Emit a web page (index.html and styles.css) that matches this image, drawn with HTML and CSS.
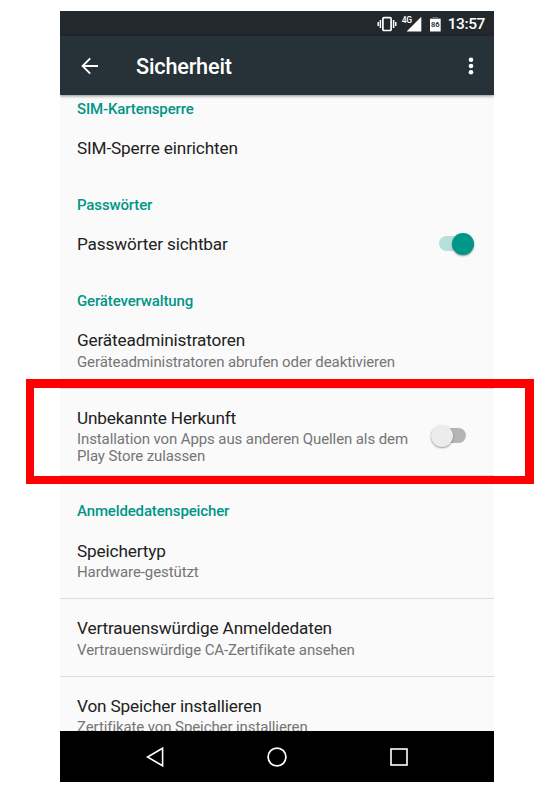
FILE: index.html
```html
<!DOCTYPE html>
<html lang="de">
<head>
<meta charset="utf-8">
<title>Sicherheit</title>
<link rel="stylesheet" href="styles.css">
</head>
<body>
<div class="phone">
  <div class="status">
    <svg class="vibrate" width="20" height="16" viewBox="0 0 20 16"><rect x="5.9" y="1.7" width="8.2" height="12.8" rx="1" fill="none" stroke="#fff" stroke-width="1.7"/><path d="M3.4 4v8M16.6 4v8M1.2 6v4M18.8 6v4" stroke="#fff" stroke-width="1.5"/></svg>
    <span class="net">4G</span>
    <svg class="signal" width="16" height="16" viewBox="0 0 16 16"><path d="M15.3 0.8V15.5H0.6Z" fill="#fff"/></svg>
    <span class="battery"><span class="level">86</span></span>
    <span class="clock">13:57</span>
  </div>
  <header class="appbar">
    <svg class="back" width="18" height="18" viewBox="0 0 18 18"><path d="M17 9H2M9.2 1.4L1.6 9l7.6 7.6" fill="none" stroke="#fff" stroke-width="1.9"/></svg>
    <h1>Sicherheit</h1>
    <svg class="more" width="6" height="18" viewBox="0 0 6 18"><g fill="#fff"><circle cx="3" cy="2.7" r="2.3"/><circle cx="3" cy="9" r="2.3"/><circle cx="3" cy="15.3" r="2.3"/></g></svg>
  </header>
  <main class="list">
    <h2 class="first">SIM-Kartensperre</h2>
    <div class="row single"><p class="title">SIM-Sperre einrichten</p></div>
    <h2>Passwörter</h2>
    <div class="row single"><p class="title">Passwörter sichtbar</p><span class="switch on"></span></div>
    <h2>Geräteverwaltung</h2>
    <div class="row admin line"><div><p class="title">Geräteadministratoren</p><p class="sub">Geräteadministratoren abrufen oder deaktivieren</p></div></div>
    <div class="row tall line"><div><p class="title">Unbekannte Herkunft</p><p class="sub">Installation von Apps aus anderen Quellen als dem<br>Play Store zulassen</p></div><span class="switch"></span></div>
    <h2 class="store">Anmeldedatenspeicher</h2>
    <div class="row line"><div><p class="title">Speichertyp</p><p class="sub">Hardware-gestützt</p></div></div>
    <div class="row line last"><div><p class="title">Vertrauenswürdige Anmeldedaten</p><p class="sub">Vertrauenswürdige CA-Zertifikate ansehen</p></div></div>
    <div class="row"><div><p class="title">Von Speicher installieren</p><p class="sub">Zertifikate von Speicher installieren</p></div></div>
  </main>
  <nav class="nav">
    <svg width="20" height="22" viewBox="0 0 20 22"><path d="M17.6 2.2v17.6L2.5 11Z" fill="none" stroke="#fff" stroke-width="1.6"/></svg>
    <svg width="22" height="22" viewBox="0 0 22 22"><circle cx="11" cy="11" r="8.9" fill="none" stroke="#fff" stroke-width="1.7"/></svg>
    <svg width="20" height="22" viewBox="0 0 20 22"><rect x="2" y="3" width="16" height="16" fill="none" stroke="#fff" stroke-width="1.6"/></svg>
  </nav>
</div>
<div class="highlight"></div>
</body>
</html>
```

FILE: styles.css
```css
* { box-sizing: border-box; margin: 0; padding: 0; }
body { width: 551px; height: 800px; background: #fff; overflow: hidden; font-family: Roboto, sans-serif; }
.phone { width: 434px; height: 771px; margin: 11px 0 0 60px; display: flex; flex-direction: column; background: #fafafa; overflow: hidden; }
.status { height: 25px; flex: none; background: #22282b; color: #fff; display: flex; align-items: center; justify-content: flex-end; padding: 1px 9px 0 0; }
.vibrate { margin-right: 5px; }
.net { font-size: 8.5px; line-height: 8px; font-weight: 600; letter-spacing: -.4px; margin: 0 -6px 8px 0; }
.signal { margin-right: 8px; }
.battery { width: 11px; height: 15px; background: linear-gradient(#686c6e 0 2px, #fff 2px); margin-right: 7px; clip-path: polygon(25% 0, 75% 0, 75% 10%, 100% 10%, 100% 100%, 0 100%, 0 10%, 25% 10%); display: flex; justify-content: center; }
.level { color: #22282b; font-size: 7.5px; line-height: 16px; font-weight: 600; }
.clock { font-size: 15.5px; line-height: 20px; font-weight: 500; letter-spacing: -.4px; }
.appbar { position: relative; z-index: 1; height: 59px; flex: none; background: #273238; color: #fff; display: flex; align-items: center; padding: 1px 20px 0 21px; box-shadow: 0 1px 3px rgba(0,0,0,.45); }
h1 { font-size: 21.7px; line-height: 28px; font-weight: 500; letter-spacing: -.2px; margin: 1px 0 0 37px; }
.more { margin-left: auto; }
.list { height: 636px; flex: none; overflow: hidden; }
h2 { height: 38px; padding: 17px 17px 0; font-size: 15px; line-height: 20px; font-weight: 500; letter-spacing: -.14px; color: #009688; white-space: nowrap; }
h2.first { height: 25px; padding-top: 4px; }
h2.store { height: 46px; padding-top: 25px; }
.row { height: 77px; padding: 18px 20px 0 17px; display: flex; justify-content: space-between; white-space: nowrap; }
.single { height: 58px; padding-top: 17px; }
.admin { padding-top: 17px; }
.admin .sub { margin-top: 3px; }
.tall { height: 87px; }
.last { height: 78px; padding-top: 18px; }
.last .sub { margin-top: 3px; }
.line { border-bottom: 1px solid #dcdcdc; }
.title { font-size: 17.2px; line-height: 22px; letter-spacing: -.15px; color: #212121; }
.sub { font-size: 15px; line-height: 17px; letter-spacing: -.1px; margin-top: 2px; color: #757575; }
.switch { position: relative; width: 35px; height: 15px; margin: 21px 8px 0 0; border-radius: 8px; background: #b5b5b5; }
.switch::before { content: ""; position: absolute; left: 0; top: -3px; width: 22px; height: 22px; border-radius: 50%; background: #ececec; box-shadow: 0 1px 2px rgba(0,0,0,.4); }
.switch.on { margin: 3px 0 0; background: #b5e0db; }
.switch.on::before { left: 13px; background: #009688; }
.nav { flex: 1; background: #000; display: flex; align-items: center; justify-content: space-between; padding: 0 85px; }
.highlight { position: absolute; left: 26px; top: 379px; width: 508px; height: 105px; border: 8px solid #f00; border-top-width: 9px; border-right-width: 9px; }
```
